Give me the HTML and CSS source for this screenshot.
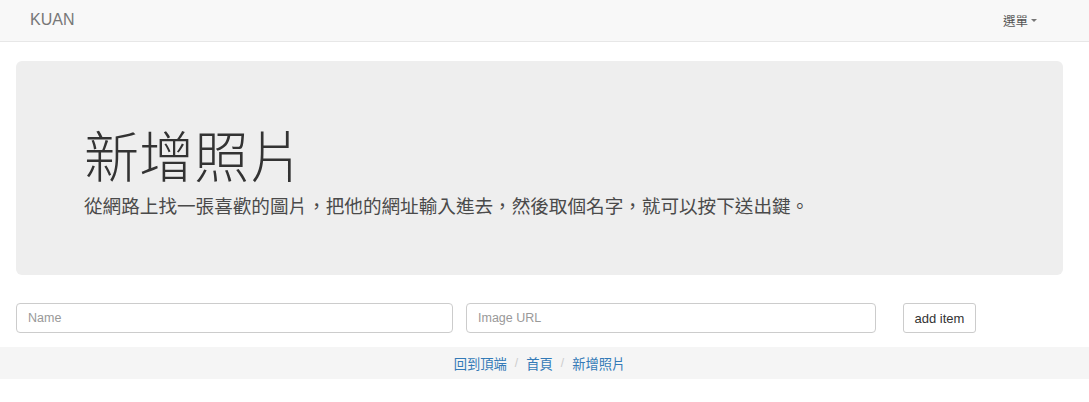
FILE: index.html
```html
<!DOCTYPE html>
<html lang="zh-Hant">
<head>
<meta charset="utf-8">
<title>KUAN</title>
<link rel="stylesheet" href="styles.css">
</head>
<body>
<nav class="navbar">
  <a class="brand" href="#">KUAN</a>
  <a class="menu" href="#">選單<span class="caret"></span></a>
</nav>
<section class="jumbotron">
  <h1 class="title">新增照片</h1>
  <p class="lead">從網路上找一張喜歡的圖片，把他的網址輸入進去，然後取個名字，就可以按下送出鍵。</p>
</section>
<form class="add-form">
  <input class="field field-name" type="text" placeholder="Name">
  <input class="field field-url" type="text" placeholder="Image URL">
  <button class="btn" type="button">add item</button>
</form>
<footer class="footer">
  <ol class="crumbs">
    <li><a href="#">回到頂端</a></li>
    <li class="sep">/</li>
    <li><a href="#">首頁</a></li>
    <li class="sep">/</li>
    <li><a href="#">新增照片</a></li>
  </ol>
</footer>
</body>
</html>
```
FILE: styles.css
```css
html, body {
  margin: 0;
  padding: 0;
  background: #fff;
}
body {
  font-family: "Liberation Sans", Arial, "Noto Sans CJK TC", sans-serif;
  font-size: 13px;
  color: #333;
}
a { text-decoration: none; }

.navbar {
  height: 42px;
  box-sizing: border-box;
  background: #f8f8f8;
  border-bottom: 1px solid #e7e7e7;
  display: flex;
  align-items: center;
  justify-content: space-between;
  padding: 0 52px 0 30px;
}
.brand {
  font-size: 16px;
  color: #777;
  line-height: 20px;
  margin-top: -2px;
}
.menu {
  font-family: "Noto Sans CJK TC", sans-serif;
  font-size: 12.5px;
  color: #555;
  display: flex;
  align-items: center;
  margin-top: -1px;
}
.caret {
  display: inline-block;
  width: 0;
  height: 0;
  margin-left: 3px;
  border-top: 3px solid #777;
  border-left: 3px solid transparent;
  border-right: 3px solid transparent;
}

.jumbotron {
  margin: 19px 26px 0 16px;
  height: 214px;
  box-sizing: border-box;
  background: #eee;
  border-radius: 6px;
  padding: 62px 60px 0 68px;
  display: flex;
  flex-direction: column;
}
.title {
  margin: 0;
  font-family: "Noto Sans CJK TC", serif;
  font-weight: 300;
  font-size: 55px;
  line-height: 60px;
  color: #333;
  letter-spacing: 0;
}
.lead {
  margin: 9px 0 0;
  font-family: "Noto Sans CJK TC", sans-serif;
  font-weight: 400;
  font-size: 18.6px;
  line-height: 26px;
  color: #4a4a4a;
}

.add-form {
  display: flex;
  align-items: center;
  margin: 28px 0 0 16px;
}
.field {
  box-sizing: border-box;
  height: 30px;
  border: 1px solid #ccc;
  border-radius: 4px;
  padding: 0 11px;
  font-family: "Liberation Sans", Arial, sans-serif;
  font-size: 12.5px;
  color: #555;
  background: #fff;
  outline: none;
}
.field::placeholder { color: #999; }
.field-name { width: 437px; }
.field-url { width: 410px; margin-left: 13px; }
.btn {
  margin-left: 27px;
  box-sizing: border-box;
  height: 30px;
  width: 73px;
  border: 1px solid #ccc;
  border-radius: 3px;
  background: #fff;
  color: #333;
  font-family: "Liberation Sans", Arial, sans-serif;
  font-size: 13px;
  padding: 0;
}

.footer {
  margin-top: 14px;
  height: 32px;
  background: #f5f5f5;
  display: flex;
  align-items: center;
  justify-content: center;
  padding-right: 10px;
}
.crumbs {
  list-style: none;
  margin: 0;
  padding: 0;
  display: flex;
  align-items: center;
  font-family: "Noto Sans CJK TC", sans-serif;
  font-size: 13.3px;
}
.crumbs a { color: #337ab7; }
.sep {
  color: #ccc;
  padding: 0 8px;
  font-family: "Liberation Sans", Arial, sans-serif;
  font-size: 12px;
}
```
